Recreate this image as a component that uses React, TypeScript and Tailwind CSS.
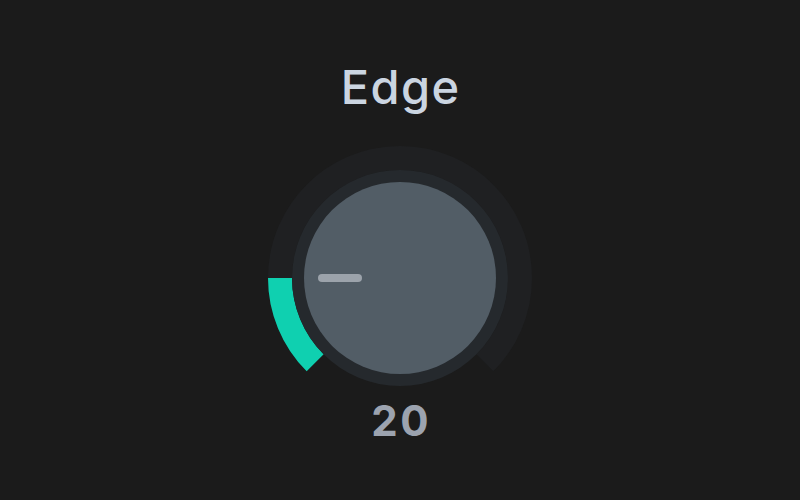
import React from "react";

const SIZE = 264;
const C = SIZE / 2;
const TRACK_R = 120;
const START = -135;
const END = 135;

function polar(deg: number, r: number) {
  const rad = (deg * Math.PI) / 180;
  return { x: C + r * Math.sin(rad), y: C - r * Math.cos(rad) };
}

function arc(from: number, to: number, r: number) {
  const a = polar(from, r);
  const b = polar(to, r);
  const large = to - from > 180 ? 1 : 0;
  return `M ${a.x} ${a.y} A ${r} ${r} 0 ${large} 1 ${b.x} ${b.y}`;
}

function Knob({ label, value, min = 0, max = 120 }: { label: string; value: number; min?: number; max?: number }) {
  const angle = START + ((value - min) / (max - min)) * (END - START);
  return (
    <div className="flex flex-col items-center pt-[4px]">
      <div className="-mr-[0.03em] text-[47px] font-medium leading-none tracking-[0.03em] text-[#cbd5e1]">{label}</div>
      <svg width={SIZE} height={SIZE} className="mt-[36px]" viewBox={`0 0 ${SIZE} ${SIZE}`}>
        <path d={arc(START, END, TRACK_R)} fill="none" stroke="#1f2022" strokeWidth={24} />
        <path d={arc(START, angle, TRACK_R)} fill="none" stroke="#0fd0b0" strokeWidth={24} />
        <circle cx={C} cy={C} r={108} fill="#25292d" />
        <circle cx={C} cy={C} r={96} fill="#525d66" />
        <g transform={`rotate(${angle + 90} ${C} ${C})`}>
          <rect x={50} y={C - 4} width={44} height={8} rx={4} fill="#9ca3ab" />
        </g>
      </svg>
      <div className="-mr-[0.06em] -mt-[10px] text-[42px] font-bold leading-none tracking-[0.06em] text-[#9ca3af]">
        {value}
      </div>
    </div>
  );
}

export default function App() {
  return (
    <div
      className="flex h-[500px] w-[800px] items-center justify-center bg-[#1b1b1b]"
      style={{ fontFamily: "Inter, 'Noto Sans', sans-serif" }}
    >
      <Knob label="Edge" value={20} />
    </div>
  );
}
